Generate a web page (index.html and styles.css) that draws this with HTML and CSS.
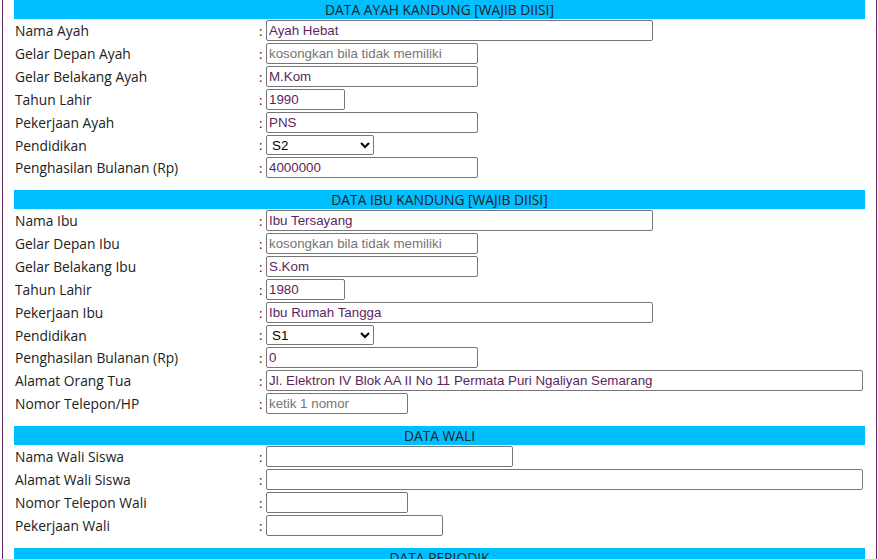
FILE: index.html
```html
<!DOCTYPE html>
<html lang="en">
<head>
  <meta charset="UTF-8">
  <title>Data Orang Tua</title>
  <link rel="stylesheet" href="styles.css">
</head>
<body>
  <div class="page">
    <div class="section">
      <div class="section-title">DATA AYAH KANDUNG [WAJIB DIISI]</div>
      <div class="row"><label>Nama Ayah</label><span class="sep">:</span><input class="w-long" type="text" value="Ayah Hebat"></div>
      <div class="row"><label>Gelar Depan Ayah</label><span class="sep">:</span><input class="w-mid" type="text" placeholder="kosongkan bila tidak memiliki"></div>
      <div class="row"><label>Gelar Belakang Ayah</label><span class="sep">:</span><input class="w-mid" type="text" value="M.Kom"></div>
      <div class="row"><label>Tahun Lahir</label><span class="sep">:</span><input class="w-year" type="text" value="1990"></div>
      <div class="row"><label>Pekerjaan Ayah</label><span class="sep">:</span><input class="w-mid" type="text" value="PNS"></div>
      <div class="row row-select"><label>Pendidikan</label><span class="sep">:</span>
        <select class="w-select">
          <option>SD</option><option>SMP</option><option>SMA</option><option>S1</option><option selected>S2</option><option>S3</option>
        </select>
      </div>
      <div class="row"><label>Penghasilan Bulanan (Rp)</label><span class="sep">:</span><input class="w-mid" type="text" value="4000000"></div>
    </div>

    <div class="section">
      <div class="section-title">DATA IBU KANDUNG [WAJIB DIISI]</div>
      <div class="row"><label>Nama Ibu</label><span class="sep">:</span><input class="w-long" type="text" value="Ibu Tersayang"></div>
      <div class="row"><label>Gelar Depan Ibu</label><span class="sep">:</span><input class="w-mid" type="text" placeholder="kosongkan bila tidak memiliki"></div>
      <div class="row"><label>Gelar Belakang Ibu</label><span class="sep">:</span><input class="w-mid" type="text" value="S.Kom"></div>
      <div class="row"><label>Tahun Lahir</label><span class="sep">:</span><input class="w-year" type="text" value="1980"></div>
      <div class="row"><label>Pekerjaan Ibu</label><span class="sep">:</span><input class="w-long" type="text" value="Ibu Rumah Tangga"></div>
      <div class="row row-select"><label>Pendidikan</label><span class="sep">:</span>
        <select class="w-select">
          <option>SD</option><option>SMP</option><option>SMA</option><option selected>S1</option><option>S2</option><option>S3</option>
        </select>
      </div>
      <div class="row"><label>Penghasilan Bulanan (Rp)</label><span class="sep">:</span><input class="w-mid" type="text" value="0"></div>
      <div class="row"><label>Alamat Orang Tua</label><span class="sep">:</span><input class="w-full" type="text" value="Jl. Elektron IV Blok AA II No 11 Permata Puri Ngaliyan Semarang"></div>
      <div class="row"><label>Nomor Telepon/HP</label><span class="sep">:</span><input class="w-phone" type="text" placeholder="ketik 1 nomor"></div>
    </div>

    <div class="section">
      <div class="section-title">DATA WALI</div>
      <div class="row"><label>Nama Wali Siswa</label><span class="sep">:</span><input class="w-wali" type="text"></div>
      <div class="row"><label>Alamat Wali Siswa</label><span class="sep">:</span><input class="w-full" type="text"></div>
      <div class="row"><label>Nomor Telepon Wali</label><span class="sep">:</span><input class="w-phone" type="text"></div>
      <div class="row"><label>Pekerjaan Wali</label><span class="sep">:</span><input class="w-job" type="text"></div>
    </div>

    <div class="section">
      <div class="section-title">DATA PERIODIK</div>
    </div>
  </div>
</body>
</html>
```

FILE: styles.css
```css
body {
  margin: 0;
  padding: 0;
  background: #fff;
  font-family: "Open Sans", "Noto Sans", sans-serif;
  color: #222;
}
.page {
  margin-left: 2px;
  width: 851px;
  padding: 0 11px 40px 11px;
  border-left: 1px solid #5e2a5e;
  border-right: 1px solid #5e2a5e;
}
.section {
  margin-bottom: 11px;
}
.section-title {
  background-color: #00bfff;
  height: 19px;
  line-height: 19px;
  text-align: center;
  font-size: 13.8px;
  color: #222;
}
.row {
  display: flex;
  align-items: center;
  height: 23px;
  font-size: 13.8px;
}
.row-select {
  height: 22px;
}
.row label {
  width: 245px;
  padding-left: 1px;
  box-sizing: border-box;
}
.sep {
  width: 4px;
  margin-right: 3px;
  font-size: 13px;
}
input, select {
  font-family: "Liberation Sans", Arial, sans-serif;
  font-size: 13.33px;
  color: #5e1f5e;
  height: 21px;
  box-sizing: border-box;
  border: 1px solid #767676;
  border-radius: 2px;
  padding: 1px 2px;
  margin: 0;
}
select {
  color: #000;
  height: 20px;
  padding: 0 0 0 1px;
  background: #fff;
}
input::placeholder {
  color: #757575;
}
.w-long { width: 387px; }
.w-mid { width: 212px; }
.w-year { width: 79px; }
.w-select { width: 108px; }
.w-full { width: 597px; }
.w-phone { width: 142px; }
.w-wali { width: 247px; }
.w-job { width: 177px; }
```
